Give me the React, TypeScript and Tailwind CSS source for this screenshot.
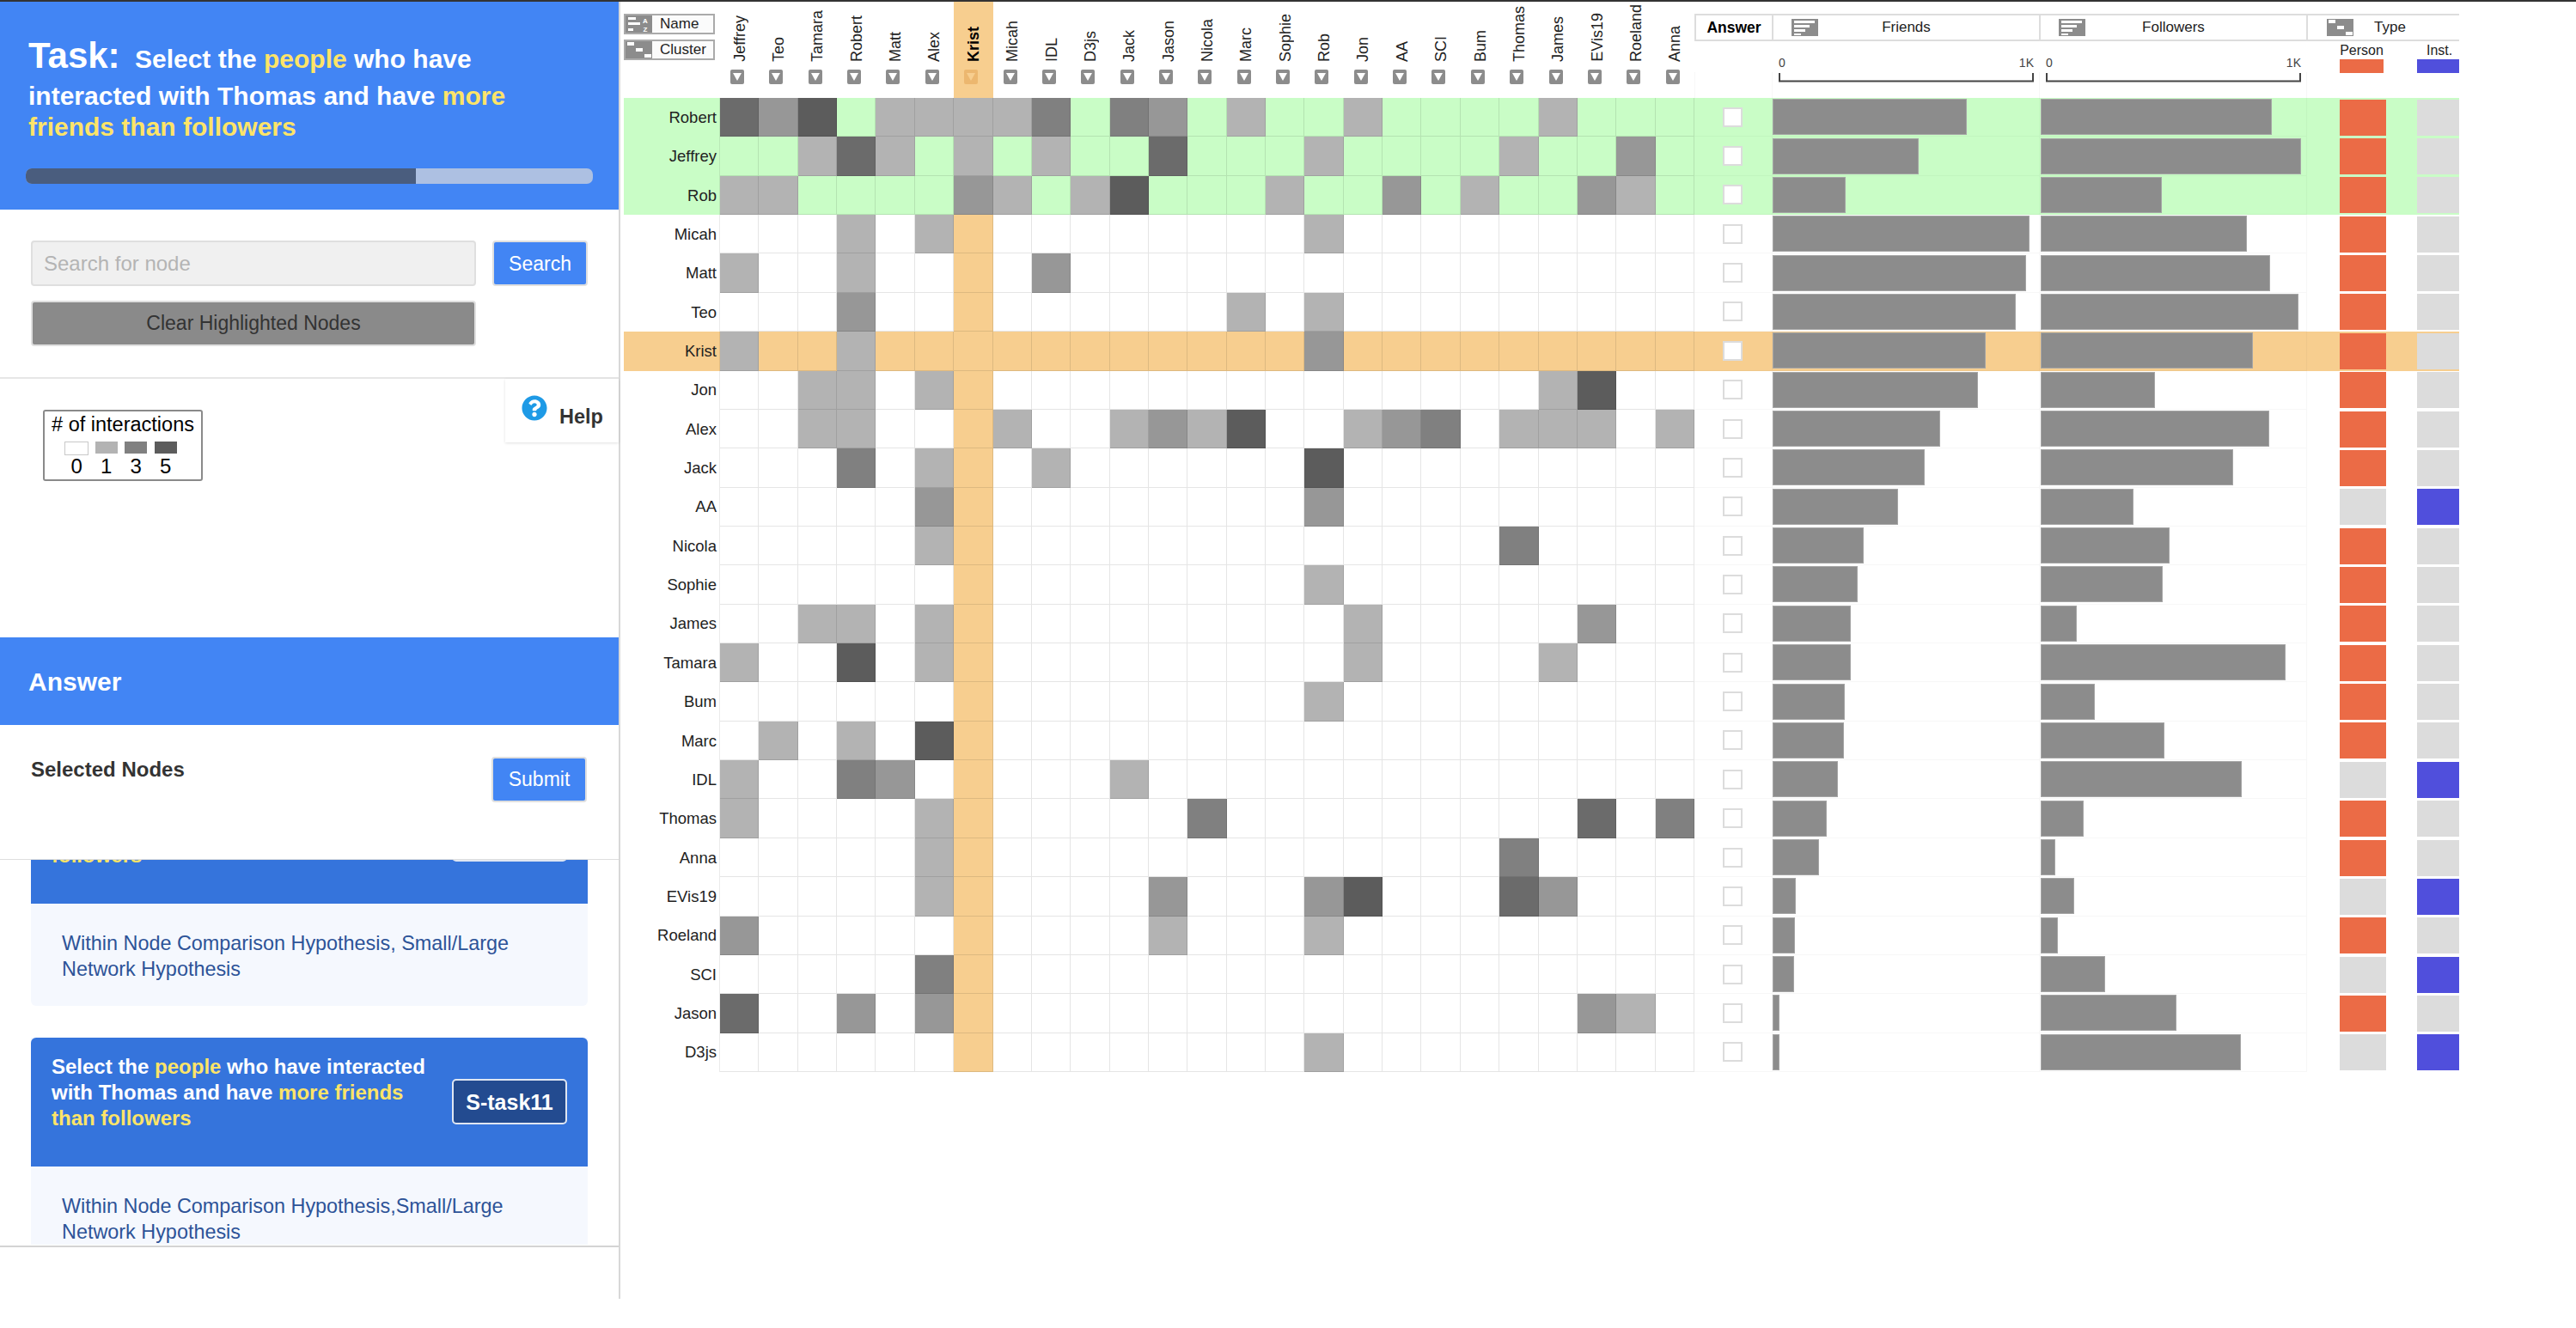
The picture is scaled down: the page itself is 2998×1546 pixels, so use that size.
import { FaQuestionCircle } from "react-icons/fa";

const HEAT = ["", "bg-[#b3b3b3]", "bg-[#979797]", "bg-[#808080]", "bg-[#6b6b6b]", "bg-[#5c5c5c]"];

const COLUMNS = [
  "Jeffrey", "Teo", "Tamara", "Robert", "Matt", "Alex", "Krist", "Micah", "IDL", "D3js", "Jack", "Jason", "Nicola",
  "Marc", "Sophie", "Rob", "Jon", "AA", "SCI", "Bum", "Thomas", "James", "EVis19", "Roeland", "Anna",
];

type Row = { name: string; cells: Record<number, number>; friends: number; followers: number; inst?: boolean; tone?: "green" | "orange" };

const ROWS: Row[] = [
  { name: "Robert", tone: "green", friends: 226, followers: 269, cells: { 0: 4, 1: 2, 2: 5, 4: 1, 5: 1, 6: 1, 7: 1, 8: 3, 10: 3, 11: 2, 13: 1, 16: 1, 21: 1 } },
  { name: "Jeffrey", tone: "green", friends: 170, followers: 303, cells: { 2: 1, 3: 4, 4: 1, 6: 1, 8: 1, 11: 4, 15: 1, 20: 1, 23: 2 } },
  { name: "Rob", tone: "green", friends: 85, followers: 141, cells: { 0: 1, 1: 1, 6: 2, 7: 1, 9: 1, 10: 5, 14: 1, 17: 2, 19: 1, 22: 2, 23: 1 } },
  { name: "Micah", friends: 299, followers: 240, cells: { 3: 1, 5: 1, 15: 1 } },
  { name: "Matt", friends: 295, followers: 267, cells: { 0: 1, 3: 1, 8: 2 } },
  { name: "Teo", friends: 283, followers: 300, cells: { 3: 2, 13: 1, 15: 1 } },
  { name: "Krist", tone: "orange", friends: 248, followers: 247, cells: { 0: 1, 3: 1, 15: 2 } },
  { name: "Jon", friends: 239, followers: 133, cells: { 2: 1, 3: 1, 5: 1, 21: 1, 22: 5 } },
  { name: "Alex", friends: 195, followers: 266, cells: { 2: 1, 3: 1, 7: 1, 10: 1, 11: 2, 12: 1, 13: 5, 16: 1, 17: 2, 18: 3, 20: 1, 21: 1, 22: 1, 24: 1 } },
  { name: "Jack", friends: 177, followers: 224, cells: { 3: 3, 5: 1, 8: 1, 15: 5 } },
  { name: "AA", inst: true, friends: 146, followers: 108, cells: { 5: 2, 15: 2 } },
  { name: "Nicola", friends: 106, followers: 150, cells: { 5: 1, 20: 3 } },
  { name: "Sophie", friends: 99, followers: 142, cells: { 15: 1 } },
  { name: "James", friends: 91, followers: 42, cells: { 2: 1, 3: 1, 5: 1, 16: 1, 22: 2 } },
  { name: "Tamara", friends: 91, followers: 285, cells: { 0: 1, 3: 5, 5: 1, 16: 1, 21: 1 } },
  { name: "Bum", friends: 84, followers: 63, cells: { 15: 1 } },
  { name: "Marc", friends: 83, followers: 144, cells: { 1: 1, 3: 1, 5: 5 } },
  { name: "IDL", inst: true, friends: 76, followers: 234, cells: { 0: 1, 3: 3, 4: 2, 10: 1 } },
  { name: "Thomas", friends: 63, followers: 50, cells: { 0: 1, 5: 1, 12: 3, 22: 4, 24: 3 } },
  { name: "Anna", friends: 54, followers: 17, cells: { 5: 1, 20: 3 } },
  { name: "EVis19", inst: true, friends: 27, followers: 39, cells: { 5: 1, 11: 2, 15: 2, 16: 5, 20: 4, 21: 2 } },
  { name: "Roeland", friends: 26, followers: 20, cells: { 0: 2, 11: 1, 15: 1 } },
  { name: "SCI", inst: true, friends: 25, followers: 75, cells: { 5: 3 } },
  { name: "Jason", friends: 8, followers: 158, cells: { 0: 4, 3: 2, 5: 2, 22: 2, 23: 1 } },
  { name: "D3js", inst: true, friends: 8, followers: 233, cells: { 15: 1 } },
];

function CardHead({ tag, children }: { tag?: string; children: React.ReactNode }) {
  return (
    <div className="flex h-[150px] justify-between rounded-t-[6px] bg-[#3574dc] pl-[24px] pr-[24px] pt-[19px] text-[24px] font-bold leading-[30px] text-white">
      <p className="w-[450px]">{children}</p>
      <div className="mt-[29px] flex h-[53px] w-[134px] flex-none items-center justify-center rounded-[5px] border-2 border-[#dfe6f2] bg-[#234b90] text-[25px]">
        {tag}
      </div>
    </div>
  );
}

function Sidebar() {
  return (
    <aside className="flex h-[1510px] w-[722px] flex-none flex-col border-r-2 border-b-2 border-[#d8d8d8]">
      <section className="h-[242px] flex-none bg-[#4285f4] pl-[33px] pr-[30px] pt-[34px]">
        <p className="text-[30px] font-bold leading-[36px] text-white">
          <span className="mr-[9px] text-[42px] leading-[58px]">Task:</span> Select the{" "}
          <span className="text-[#fde468]">people</span> who have interacted with Thomas and have{" "}
          <span className="text-[#fde468]">more friends than followers</span>
        </p>
        <div className="mt-[30px] -ml-[3px] flex h-[18px] w-[660px] overflow-hidden rounded-[7px] bg-[#adc0e2]">
          <div className="h-full w-[454px] bg-[#4a5d7e]" />
        </div>
      </section>

      <section className="h-[197px] flex-none border-b-2 border-[#e6e6e6] pl-[36px] pt-[36px]">
        <div className="flex gap-[19px]">
          <input
            placeholder="Search for node"
            className="h-[53px] w-[518px] rounded-[4px] border-2 border-[#dfdfdf] bg-[#f0f0f0] px-[13px] text-[24px] placeholder:text-[#b4b4b4]"
          />
          <button className="h-[53px] w-[111px] rounded-[4px] border-2 border-[#dfdfdf] bg-[#4285f4] pt-[2px] text-[23px] text-white">Search</button>
        </div>
        <button className="mt-[17px] h-[53px] w-[518px] rounded-[4px] border-2 border-[#dfdfdf] bg-[#8a8a8a] text-[23px] text-[#333]">
          Clear Highlighted Nodes
        </button>
      </section>

      <section className="flex h-[301px] flex-none items-start justify-between">
        <div className="ml-[50px] mt-[36px] h-[83px] w-[186px] rounded-[3px] border-2 border-[#8a8a8a] text-black">
          <p className="pt-[1px] text-center text-[23.5px] leading-[28px]">
            # of interactions
          </p>
          <div className="flex pl-[20px] pt-[6px]">
            {["h-[16px] w-[28px] border border-[#c8c8c8] bg-white", "h-[14px] w-[26px] bg-[#b3b3b3]", "h-[14px] w-[26px] bg-[#808080]", "h-[14px] w-[26px] bg-[#5c5c5c]"].map((c) => (
              <div key={c} className="flex w-[34.5px] justify-center">
                <div className={c} />
              </div>
            ))}
          </div>
          <div className="flex pl-[20px]">
            {["0", "1", "3", "5"].map((n) => (
              <span key={n} className="w-[34.5px] text-center text-[24px] leading-[25px]">
                {n}
              </span>
            ))}
          </div>
        </div>
        <div className="flex h-[74px] w-[132px] flex-none gap-[14px] pl-[19px] pt-[19px] shadow-[0_1px_3px_rgba(0,0,0,0.12)]">
          <FaQuestionCircle className="h-[30px] w-[30px] flex-none text-[#1e9ae6]" />
          <span className="pt-[11px] text-[23.5px] font-bold leading-[28px] text-[#333]">Help</span>
        </div>
      </section>

      <section className="flex h-[102px] flex-none items-center bg-[#4285f4] pl-[33px] text-[30px] font-bold text-white">Answer</section>

      <section className="flex h-[157px] flex-none items-start justify-between border-b border-[#dedede] pl-[36px] pr-[37px] pt-[37px]">
        <h3 className="pt-[1px] text-[24px] font-bold leading-[28px] text-[#333]">Selected Nodes</h3>
        <button className="h-[53px] w-[111px] rounded-[4px] border-2 border-[#dfdfdf] bg-[#4285f4] text-[23px] text-white">Submit</button>
      </section>

      <section className="h-[449px] flex-none overflow-hidden px-[36px]">
        <div className="-mt-[99px] w-[648px]">
          <div className="rounded-b-[6px] bg-[#f5f8fe] text-[23.4px] leading-[30px] text-[#2d5398]">
            <CardHead>
              <span className="block pt-[60px] text-[#fde468]">followers</span>
            </CardHead>
            <p className="h-[119px] pl-[36px] pr-[60px] pt-[31px]">Within Node Comparison Hypothesis, Small/Large Network Hypothesis</p>
          </div>
          <div className="mt-[37px] bg-[#f5f8fe] text-[23.4px] leading-[30px] text-[#2d5398]">
            <CardHead tag="S-task11">
              Select the <span className="text-[#fde468]">people</span> who have interacted with Thomas and have{" "}
              <span className="text-[#fde468]">more friends than followers</span>
            </CardHead>
            <p className="pl-[36px] pr-[60px] pt-[31px]">Within Node Comparison Hypothesis,Small/Large Network Hypothesis</p>
          </div>
        </div>
      </section>

      <div className="h-[62px] flex-none border-t-2 border-[#d4d4d4] bg-white" />
    </aside>
  );
}

function SortButton({ label, icon }: { label: string; icon: React.ReactNode }) {
  return (
    <div className="flex h-[24px] w-[106px] items-center gap-[9px] border-2 border-[#aaa] bg-[#fbfbfb] text-[17px] text-[#222]">
      {icon}
      {label}
    </div>
  );
}

const NameIcon = (
  <svg width="31" height="20" className="flex-none">
    <rect width="31" height="20" fill="#8c8c8c" />
    <path d="M3 2h9v3H3zM3 8h14v3H3zM3 15h6v3H3z" fill="#fff" />
    <text x="23" y="9" fontSize="8" fontWeight="700" textAnchor="middle" fill="#fff">A</text>
    <text x="23" y="18.5" fontSize="8" fontWeight="700" textAnchor="middle" fill="#fff">Z</text>
  </svg>
);

const ClusterIcon = (
  <svg width="31" height="20" className="flex-none">
    <rect width="31" height="20" fill="#8c8c8c" />
    <path d="M2 1h8v4H2zM12 8h8v4h-8zM22 15h8v4h-8z" fill="#fff" />
  </svg>
);

const BarsIcon = (
  <svg width="31" height="20" className="flex-none">
    <rect width="31" height="20" fill="#8c8c8c" />
    <path d="M3 2h24v3H3zM3 7h18v3H3zM3 12h13v3H3zM3 17h8v2H3z" fill="#fff" />
  </svg>
);

const Axis = ({ className }: { className: string }) => (
  <div className={className}>
    <div className="flex justify-between text-[14px] leading-[16px] text-[#444]">
      <span>0</span>
      <span>1K</span>
    </div>
    <svg width="297" height="11" className="mt-[4px] block">
      <path d="M1 0V9.5H296V0" fill="none" stroke="#444" strokeWidth="2" />
    </svg>
  </div>
);

function HeaderRow() {
  return (
    <div className="flex h-[112px]">
      <div className="flex w-[116px] flex-none flex-col gap-[6px] pl-[4px] pt-[14px]">
        <SortButton label="Name" icon={NameIcon} />
        <SortButton label="Cluster" icon={ClusterIcon} />
      </div>
      {COLUMNS.map((c) => {
        const krist = c === "Krist";
        return (
          <div key={c} className={`flex w-[45.36px] flex-none flex-col ${krist ? "bg-[#f7ce8f]" : ""}`}>
            <div className="flex h-[70px] items-end justify-center">
              <span className={`rotate-180 text-[18px] leading-[20px] [writing-mode:vertical-rl] ${krist ? "font-bold text-black" : "text-[#222]"}`}>{c}</span>
            </div>
            <div className={`ml-[12px] mt-[9px] flex h-[17px] w-[16px] items-center justify-center rounded-[2px] ${krist ? "bg-[#ecb76f]" : "bg-[#8c8c8c]"}`}>
              <svg width="10" height="9">
                <path d="M0 0H10L5 9Z" fill={krist ? "#f7ce8f" : "#fff"} />
              </svg>
            </div>
          </div>
        );
      })}
      <div className="w-[890px] flex-none">
        <div className="mt-[14px] flex h-[32px] items-center border-y-2 border-[#ddd] text-[17px] text-[#222]">
          <div className="flex h-full w-[90px] items-center justify-center border-l-2 border-[#ddd] text-[17.5px] font-bold text-black">Answer</div>
          <div className="relative flex h-full w-[311px] items-center justify-center border-l-2 border-[#ddd]">
            <span className="absolute left-[21px]">{BarsIcon}</span>
            Friends
          </div>
          <div className="relative flex h-full w-[311px] items-center justify-center border-l-2 border-[#ddd]">
            <span className="absolute left-[21px]">{BarsIcon}</span>
            Followers
          </div>
          <div className="flex h-full w-[178px] items-center border-l-2 border-[#ddd] pl-[22px]">
            {ClusterIcon}
            <span className="ml-[24px]">Type</span>
          </div>
        </div>
        <div className="relative flex">
          <div className="absolute left-0 top-[36px] h-[30px] w-px bg-black/3" />
          <div className="absolute left-[90px] top-[36px] h-[30px] w-px bg-black/3" />
          <div className="absolute left-[401px] top-[36px] h-[30px] w-px bg-black/3" />
          <div className="absolute left-[712px] top-[36px] h-[30px] w-px bg-black/3" />
          <div className="w-[90px] flex-none" />
          <Axis className="ml-[8px] mt-[17px] w-[297px] flex-none" />
          <Axis className="ml-[14px] mt-[17px] w-[297px] flex-none" />
          <div className="ml-[6px] flex w-[178px] flex-none overflow-hidden pl-[39px] pt-[1px] text-[16px] text-[#222]">
            <div className="w-[90px] flex-none">
              <div className="w-[51px] text-center leading-[20px]">Person</div>
              <div className="h-[16px] w-[51px] bg-[#eb6b46]" />
            </div>
            <div className="w-[49px] flex-none">
              <div className="pl-[11px] leading-[20px]">Inst.</div>
              <div className="h-[16px] bg-[#504fdc]" />
            </div>
          </div>
        </div>
      </div>
    </div>
  );
}

function MatrixRow({ row }: { row: Row }) {
  const bg = row.tone === "green" ? "bg-[#c9fdc6]" : row.tone === "orange" ? "bg-[#f7ce8f]" : "";
  return (
    <div className={`ml-[4px] flex h-[45.36px] w-[2136px] ${bg}`}>
      <div className="flex w-[112px] flex-none items-center justify-end border-r border-black/8 pr-[3px] text-[18.5px] text-[#222]">{row.name}</div>
      {COLUMNS.map((c, i) => {
        const level = row.cells[i];
        const fill = level ? HEAT[level] : c === "Krist" ? "bg-[#f7ce8f]" : "";
        return <div key={c} className={`h-full w-[45.36px] flex-none border-r border-b border-black/10 ${fill}`} />;
      })}
      <div className="flex w-[90px] flex-none items-center justify-center border-b border-black/3">
        <div className="h-[23px] w-[23px] border-2 border-[#dcdcdc] bg-white" />
      </div>
      <div className="flex w-[311px] flex-none items-center border-b border-l border-black/3">
        <div className="h-[42px] border border-[#a6a6a6] bg-[#8c8c8c]" style={{ width: row.friends }} />
      </div>
      <div className="flex w-[311px] flex-none items-center border-b border-l border-black/3 pl-[1px]">
        <div className="h-[42px] border border-[#a6a6a6] bg-[#8c8c8c]" style={{ width: row.followers }} />
      </div>
      <div className="flex w-[178px] flex-none items-center border-l border-black/3 pl-[38px]">
        <div className={`h-[42px] w-[54px] flex-none ${row.inst ? "bg-[#dcdcdc]" : "bg-[#eb6b46]"}`} />
        <div className={`ml-[36px] h-[42px] w-[49px] flex-none ${row.inst ? "bg-[#504fdc]" : "bg-[#dcdcdc]"}`} />
      </div>
    </div>
  );
}

export default function App() {
  return (
    <div className="h-[1546px] w-[2998px] overflow-hidden bg-white font-['Liberation_Sans',Arial,sans-serif]">
      <div className="h-[2px] bg-[#333]" />
      <div className="flex">
        <Sidebar />
        <main className="flex-1">
          <HeaderRow />
          {ROWS.map((row) => (
            <MatrixRow key={row.name} row={row} />
          ))}
        </main>
      </div>
    </div>
  );
}
